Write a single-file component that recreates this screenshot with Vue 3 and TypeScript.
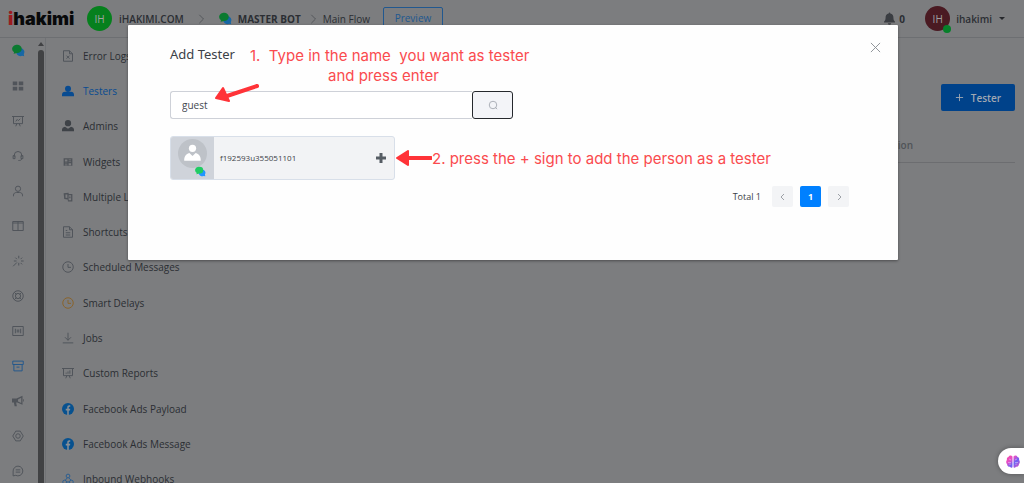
<script setup lang="ts">
import { ref } from 'vue'

interface Entry {
  label: string
  icon: string
  tone?: string
}

const rail: string[] = [
  'chat', 'grid', 'board', 'headset', 'user', 'columns', 'spark',
  'lifebuoy', 'frame', 'archive', 'horn', 'gear', 'comment',
]

const menu: Entry[] = [
  { label: 'Error Logs', icon: 'filex' },
  { label: 'Testers', icon: 'person', tone: 'active' },
  { label: 'Admins', icon: 'admin', tone: 'solid' },
  { label: 'Widgets', icon: 'widget' },
  { label: 'Multiple Languages', icon: 'lang' },
  { label: 'Shortcuts', icon: 'file' },
  { label: 'Scheduled Messages', icon: 'clock' },
  { label: 'Smart Delays', icon: 'clock', tone: 'amber' },
  { label: 'Jobs', icon: 'download' },
  { label: 'Custom Reports', icon: 'report' },
  { label: 'Facebook Ads Payload', icon: 'facebook' },
  { label: 'Facebook Ads Message', icon: 'facebook' },
  { label: 'Inbound Webhooks', icon: 'hook', tone: 'blue' },
]

const stroked: Record<string, string> = {
  board: 'M0 2h16M2 2v9.500h12V2M5 15l1.500-3.500M11 15l-1.500-3.500M5 8.500l2-2.500 1.500 1.500L11 5',
  report: 'M0 2h16M2 2v9.500h12V2M5 15l1.500-3.500M11 15l-1.500-3.500M5.500 9V7.500M8 9V6M10.500 9V4.500',
  headset: 'M3 9V7a5 5 0 0 1 10 0v2M3 7.500H1.500v4H4v-4zM13 7.500h1.500v4H12v-4zM13 11.500c0 2-2 2.500-4.500 2.500',
  user: 'M8 1.500a3.500 3.500 0 1 1 0 7a3.500 3.500 0 1 1 0-7M2 15v-1.500c0-2.500 2-3.500 4-3.500h4c2 0 4 1 4 3.500V15',
  columns: 'M1 2h14v12H1zM8 2v12M1 4h14',
  spark: 'M9 1v3.500M9 10.500V14M2.500 8H6M12 8h3.500M4.500 3.500l2 2M11.500 5.500l2-2M11.500 10.500l2 2M6.500 10L1.500 15',
  lifebuoy: 'M8 1a7 7 0 1 1 0 14a7 7 0 1 1 0-14M8 4.500a3.500 3.500 0 1 1 0 7a3.500 3.500 0 1 1 0-7M3 3l3 3M13 3l-3 3M3 13l3-3M13 13l-3-3',
  frame: 'M1 2h14v12H1zM4.500 5v6M11.500 5v6M7 6v4M9 6v4',
  archive: 'M1 1.500h14V6H1zM2.500 6v8.500h11V6M6 9.500h4',
  gear: 'M5 1.500h6l1.500 2.500L15 8l-2.500 4-1.500 2.500H5L3.500 12 1 8l2.500-4zM8 5a3 3 0 1 1 0 6a3 3 0 1 1 0-6',
  comment: 'M8 1.500a6.500 6.500 0 1 1-3 12.300L1.500 14.500V8A6.500 6.500 0 0 1 8 1.500M5 6.500h6M5 9.500h6',
  filex: 'M2 1h8l4 4v10H2zM10 1v4h4M6 7.500l4 4M10 7.500l-4 4',
  file: 'M2 1h8l4 4v10H2zM10 1v4h4M5 6h2M5 9h6M5 12h6',
  clock: 'M8 1a7 7 0 1 1 0 14a7 7 0 1 1 0-14M8 4v4.500h4',
  download: 'M8 1v10M4 7l4 4 4-4M1 14.500h14',
  hook: 'M8 1.500a2.500 2.500 0 1 1 0 5a2.500 2.500 0 1 1 0-5M3.500 9.500a2.500 2.500 0 1 1 0 5a2.500 2.500 0 1 1 0-5M12.500 9.500a2.500 2.500 0 1 1 0 5a2.500 2.500 0 1 1 0-5M7 6.500L4.500 9.500M9 6.500l3 3M6 12h4',
}

const filled: Record<string, string> = {
  grid: 'M1 2h6v5H1zM9 2h6v5H9zM1 9h6v5H1zM9 9h6v5H9z',
  horn: 'M0 4.500h6L14 1v12L7 10H5.500l1 5h-3L2.500 10H0zM8 6v2.800L12.300 10.500V3.800zM15 5.500h1v3h-1z',
  person: 'M8 1a4 4 0 1 1 0 8a4 4 0 1 1 0-8M0 15v-2c0-2.500 1.500-4 4-4h8c2.500 0 4 1.500 4 4v2z',
  admin: 'M8 0a4 4 0 1 1 0 8.400a4 4 0 1 1 0-8.400M0 15v-2c0-2 1.500-3.500 4-4l4 2.500L12 9c2.500.500 4 2 4 4v2z',
  widget: 'M1 2h14v12H1zM3 4v3h4V4zM9 4v1h4V4zM9 7v1h4V7zM3 9v1h4V9zM3 12v1h4v-1zM9 10v3h4v-3z',
  lang: 'M1 2l8-1v2h6v12H8l-.500-3L2 11zM9 5v8h4V5zM4 4v5l3 .500V4zM10 7h2v3h-2z',
}

const query = ref('guest')
const page = ref(1)
</script>

<template>
  <div class="app">
    <header class="topbar">
      <span class="logo"><span class="logo-i">i</span>hakimi</span>
      <span class="avatar org">IH</span>
      <span class="org-name">iHAKIMI.COM</span>
      <svg class="chev" viewBox="0 0 8 12"><path d="M2 1l5 5-5 5" /></svg>
      <svg class="chat crumb-chat" viewBox="0 0 16 16"><path class="blue-bubble" d="M10 5a5 5 0 0 1 4.500 7.500L15 15l-2.500-.500A5 5 0 1 1 10 5" /><path class="green-bubble" d="M6.500 1a5.500 5 0 0 1 0 10L2 12l.500-2A5.500 5 0 0 1 6.500 1" /></svg>
      <strong class="bot">MASTER BOT</strong>
      <svg class="chev" viewBox="0 0 8 12"><path d="M2 1l5 5-5 5" /></svg>
      <span class="flow">Main Flow</span>
      <button class="preview" type="button">Preview</button>
      <span class="spacer"></span>
      <svg class="bell" viewBox="0 0 14 16"><path d="M6 1.500a1 1 0 0 1 2 0C11 2 12 4 12 7c0 3 1 4 2 5v1H0v-1c1-1 2-2 2-5 0-3 1-5 4-5.500M5 14h4a2 2 0 0 1-4 0" /></svg>
      <strong class="count">0</strong>
      <span class="avatar me">IH<i class="online"></i></span>
      <button class="account" type="button">ihakimi<span class="caret"></span></button>
    </header>

    <div class="body">
      <nav class="rail" aria-label="Sections">
        <a v-for="name in rail" :key="name" href="#" :class="{ current: name === 'archive' }" :aria-label="name">
          <svg v-if="name === 'chat'" class="chat" viewBox="0 0 16 16"><path class="blue-bubble" d="M10 5a5 5 0 0 1 4.500 7.500L15 15l-2.500-.500A5 5 0 1 1 10 5" /><path class="green-bubble" d="M6.500 1a5.500 5 0 0 1 0 10L2 12l.500-2A5.500 5 0 0 1 6.500 1" /></svg>
          <svg v-else class="icon" viewBox="0 0 16 16">
            <path v-if="filled[name]" class="fill" :d="filled[name]" />
            <path v-else class="line" :d="stroked[name]" />
          </svg>
        </a>
      </nav>
      <div class="scroll"><span class="arrow"></span><span class="thumb"></span></div>
      <nav class="menu" aria-label="Tools">
        <a v-for="item in menu" :key="item.label" href="#" :class="item.tone">
          <svg v-if="item.icon === 'facebook'" class="icon fb" viewBox="0 0 16 16"><circle cx="8" cy="8" r="8" /><path d="M7 16v-6H5V7.500h2V6c0-2 1-3 2.800-3H11v2h-1c-.800 0-1 .400-1 1v1.500h2L10.700 10H9v6z" /></svg>
          <svg v-else class="icon" :class="{ small: item.icon === 'widget' || item.icon === 'lang' }" viewBox="0 0 16 16">
            <path v-if="filled[item.icon]" class="fill" :d="filled[item.icon]" />
            <path v-else class="line" :d="stroked[item.icon]" />
          </svg>
          <span>{{ item.label }}</span>
        </a>
      </nav>
      <main class="content">
        <button class="add" type="button">
          <svg viewBox="0 0 10 10"><path d="M5 1v8M1 5h8" /></svg>Tester
        </button>
        <div class="table-head">Action</div>
      </main>
    </div>

    <div class="overlay">
      <section class="dialog" role="dialog" aria-label="Add Tester">
        <h1>Add Tester</h1>
        <button class="close" type="button" aria-label="Close">
          <svg viewBox="0 0 12 12"><path d="M1 1l10 10M11 1L1 11" /></svg>
        </button>
        <form class="search" @submit.prevent>
          <input v-model="query" type="text" aria-label="Tester name" />
          <button type="submit" aria-label="Search">
            <svg viewBox="0 0 12 12"><path d="M6 1.500a4.500 4.500 0 1 1 0 9a4.500 4.500 0 1 1 0-9M8.500 8.500L11 11" /></svg>
          </button>
        </form>
        <article class="result">
          <div class="photo">
            <svg class="face" viewBox="0 0 28 28"><circle class="disc" cx="14" cy="14" r="14" /><circle cx="14" cy="9" r="3.500" /><path d="M6 21c0-4 1-6 5-7.500l3 3 3-3c4 1.500 5 3.500 5 7.500z" /></svg>
            <svg class="chat bright" viewBox="0 0 16 16"><path class="blue-bubble" d="M10 5a5 5 0 0 1 4.500 7.500L15 15l-2.500-.500A5 5 0 1 1 10 5" /><path class="green-bubble" d="M6.500 1a5.500 5 0 0 1 0 10L2 12l.500-2A5.500 5 0 0 1 6.500 1" /></svg>
          </div>
          <strong>f192593u355051101</strong>
          <button type="button" aria-label="Add as tester"><svg viewBox="0 0 12 12"><path d="M6 1v10M1 6h10" /></svg></button>
        </article>
        <div class="pager">
          <span>Total 1</span>
          <button type="button" aria-label="Previous"><svg viewBox="0 0 8 8"><path d="M5 1L2 4l3 3" /></svg></button>
          <button class="on" type="button" @click="page = 1">{{ page }}</button>
          <button type="button" aria-label="Next"><svg viewBox="0 0 8 8"><path d="M3 1l3 3-3 3" /></svg></button>
        </div>

        <p class="note first"><span>1.&nbsp; Type in the name&nbsp; you want as tester</span><span class="second-line">and press enter</span></p>
        <p class="note second">2. press the + sign to add the person as a tester</p>
        <svg class="pointer one" viewBox="0 0 44 20"><path class="shaft" d="M42 3L12 13" /><path class="head" d="M8 5L14 18 1 15z" /></svg>
        <svg class="pointer two" viewBox="0 0 36 16"><path class="shaft" d="M35 8H8" /><path class="head" d="M12 1v14L1 8z" /></svg>
      </section>
    </div>

    <button class="assistant" type="button" aria-label="Assistant">
      <svg viewBox="0 0 14 13">
        <defs><linearGradient id="brain" x1="0" y1="0" x2="1" y2="1"><stop offset="0" stop-color="#fb4aa0" /><stop offset=".35" stop-color="#e34fc8" /><stop offset=".6" stop-color="#6a62f5" /><stop offset="1" stop-color="#e850c0" /></linearGradient></defs>
        <path class="brain" d="M6.500 1.500C5.500 0 3 0 2.500 2 1 2.300.500 4 1 5-.200 6 0 8 1 9c0 2 1.500 3 3 2.800 1 1.500 2.500 1 2.500 0zM7.500 1.500C8.500 0 11 0 11.500 2c1.500.300 2 2 1.500 3 1.200 1 1 3 0 4 0 2-1.500 3-3 2.800-1 1.500-2.500 1-2.500 0z" />
        <path class="fold" d="M3 4l2 1M2 7.500h3M4 10V8.500M11 4L9 5M12 7.500H9M10 10V8.500" />
      </svg>
    </button>
  </div>
</template>

<style>
html, body { margin: 0; background: #7c7d7f; }
</style>

<style scoped>
.app { position: relative; height: 100vh; overflow: hidden; background: #7c7d7f; color: #2b2e33; font: 10px/14px "Open Sans", "Noto Sans", sans-serif; }
* { box-sizing: border-box; }
a { color: inherit; text-decoration: none; }
button { font: inherit; padding: 0; border: 0; background: none; color: inherit; }
svg { display: block; flex: none; }

.topbar { display: flex; align-items: center; height: 38px; padding: 0 19px 0 8px; border-bottom: 1px solid #6d6f72; }
.logo { width: 79px; color: #08090a; font: 900 18px/22px Inter, "Noto Sans", sans-serif; }
.logo-i { color: #9c1c20; }
.avatar { position: relative; display: grid; place-items: center; width: 25px; height: 25px; border-radius: 50%; color: #a0a0a0; }
.org { background: #06801d; }
.org-name { margin: 0 13px 0 7px; font-weight: 600; }
.chev { width: 8px; height: 10px; fill: none; stroke: #4e5155; }
.chat { width: 13px; height: 13px; }
.green-bubble { fill: #0b7a30; }
.blue-bubble { fill: #1767a5; }
.crumb-chat { margin: 0 6px 0 14px; }
.bot { margin-right: 8px; }
.flow { margin: 0 13px 0 6px; font-size: 11px; }
.preview { align-self: flex-start; width: 60px; height: 22px; margin-top: 7px; border: 1px solid #21588f; border-radius: 2px; color: #21588f; }
.spacer { flex: 1; }
.bell { width: 11px; height: 13px; fill: #3a3d42; }
.count { width: 26px; margin-left: 4px; }
.me { background: #4a1a22; }
.online { position: absolute; right: -1px; bottom: -2px; width: 8px; height: 8px; border-radius: 50%; background: #06802a; }
.account { display: flex; align-items: center; gap: 7px; margin-left: 6px; font-weight: 600; }
.caret { border: 3px solid transparent; border-top-color: #26282c; border-bottom: 0; }
.bot, .flow { font-family: "Open Sans", sans-serif; }
.flow { font-size: 10px; }

.body { display: grid; grid-template-columns: 36px 10px 1fr 4fr; height: calc(100vh - 38px); }
.rail, .menu { display: grid; grid-auto-rows: 1fr; color: #50545a; }
.rail { height: calc(100vh - 28px); margin-top: -5px; }
.rail a, .menu a { display: flex; align-items: center; }
.rail a { justify-content: center; }
.icon { width: 12px; height: 12px; }
.line { fill: none; stroke: currentColor; stroke-width: 1.3; }
.fill { fill: currentColor; fill-rule: evenodd; }
.current { color: #25588c; }
.scroll { display: flex; flex-direction: column; align-items: center; gap: 4px; padding-top: 4px; border-right: 1px solid #717376; }
.arrow { border: 3px solid transparent; border-bottom: 4px solid #404143; border-top: 0; }
.thumb { flex: 1; width: 6px; border-radius: 3px; background: #414244; }
.menu { height: calc(100vh - 24px); padding-left: 16px; white-space: nowrap; }
.menu a { gap: 9px; }
.menu a span { color: #2b2e33; }
.menu .small { padding: 1px; }
.menu .active, .menu .active span { color: #084b91; }
.solid { color: #3e4247; }
.amber { color: #8a632a; }
.blue { color: #2a5e90; }
.fb circle { fill: #07518f; }
.fb path { fill: #8a8f95; }
.content { display: flex; flex-direction: column; align-items: flex-end; padding: 46px 9px 0 0; }
.add { display: flex; align-items: center; justify-content: center; gap: 7px; width: 74px; height: 27px; border-radius: 2px; background: #00428a; color: #a0a8b2; font-weight: 600; }
.add svg { width: 9px; height: 9px; fill: none; stroke: #a0a8b2; }
.table-head { width: 100%; padding: 27px 102px 10px 0; border-bottom: 1px solid #6c6d70; color: #505458; font-weight: 600; text-align: right; }

.overlay { position: absolute; inset: 0; display: flex; align-items: flex-start; justify-content: center; padding: 25px 126px 0 128px; }
.dialog { position: relative; flex: 1; min-height: 235px; padding: 20px 42px; border-radius: 1px; background: #fefefe; box-shadow: 0 1px 3px #0006; color: #3c4147; }
h1 { margin: 0; font: 400 13px/18px "Noto Sans", sans-serif; }
.close { position: absolute; top: 17px; right: 17px; }
.close svg { width: 11px; height: 11px; fill: none; stroke: #888c92; }
.search { display: flex; width: 343px; margin-top: 28px; }
.search input { flex: 1; min-width: 0; height: 28px; padding: 0 11px; border: 1px solid #ced1d8; border-right: 0; border-radius: 3px 0 0 3px; outline: 0; background: #fff; color: #444950; font: 10px/14px "Open Sans", sans-serif; }
.search button { display: grid; place-items: center; width: 41px; border: 1px solid #25282d; border-radius: 3px; background: #f3f4f8; }
.search svg { width: 10px; height: 10px; fill: none; stroke: #adb1b9; stroke-width: 1.2; }
.result { display: flex; align-items: center; width: 225px; height: 44px; margin-top: 17px; border: 1px solid #d8dfe9; border-radius: 3px; overflow: hidden; background: #f2f3f5; }
.photo { position: relative; width: 43px; height: 100%; padding: 2px 7px; background: #cfd3da; }
.face { width: 29px; height: 29px; fill: #fff; }
.disc { fill: #bec2c8; }
.photo .chat { position: absolute; left: 24px; bottom: 2px; width: 11px; height: 11px; }
.bright .green-bubble { fill: #20cc63; }
.bright .blue-bubble { fill: #2196ff; }
.result strong { flex: 1; margin-left: 6px; font-size: 8px; font-weight: 500; }
.result button { margin-right: 7px; }
.result button svg { width: 12px; height: 12px; fill: none; stroke: #565d64; stroke-width: 3; }
.pager { display: flex; align-items: center; justify-content: flex-end; gap: 7px; margin: 6px 7px 0 0; font-size: 9px; }
.pager span { margin-right: 4px; }
.pager button { display: grid; place-items: center; width: 21px; height: 21px; border-radius: 2px; background: #f3f4f6; }
.pager svg { width: 8px; height: 8px; fill: none; stroke: #9da1a7; }
.pager .on { background: #0080ff; color: #fff; font-weight: 700; }

.note { position: absolute; margin: 0; color: #fa4b4e; font: 15px/20px Inter, "Noto Sans", sans-serif; white-space: nowrap; }
.first { left: 122px; top: 21px; }
.first span { display: block; }
.first .second-line { padding-left: 78px; }
.second { left: 304px; top: 124px; }
.pointer { position: absolute; }
.one { left: 87px; top: 58px; width: 44px; height: 20px; }
.two { left: 268px; top: 125px; width: 36px; height: 16px; }
.shaft { fill: none; stroke: #ff3338; stroke-width: 4; stroke-linecap: round; }
.head { fill: #ff3338; stroke: #ff3338; stroke-width: 2; stroke-linejoin: round; }

.assistant { position: absolute; right: 0; bottom: 9px; display: grid; place-items: center; width: 26px; height: 26px; padding-left: 3px; border-radius: 13px 0 0 13px; background: #fff; box-shadow: 0 0 5px #0005; }
.assistant svg { width: 14px; height: 13px; }
.brain { fill: url(#brain); }
.fold { fill: none; stroke: #fff8; stroke-width: 0.7; }
</style>
